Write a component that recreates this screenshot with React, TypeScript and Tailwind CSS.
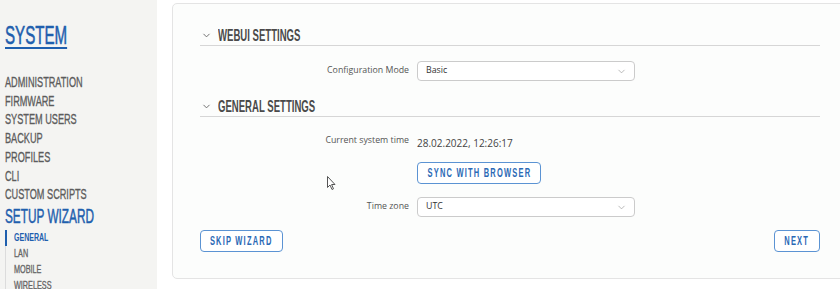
import { ChevronDown } from "lucide-react";

const sans = "font-['Liberation_Sans','Arial',sans-serif]";
const body = "font-['Open_Sans','Liberation_Sans',sans-serif]";

// no condensed face installed, so narrow the glyphs by hand
const squeeze = "inline-block whitespace-nowrap origin-left";

const menu = [
  "ADMINISTRATION",
  "FIRMWARE",
  "SYSTEM USERS",
  "BACKUP",
  "PROFILES",
  "CLI",
  "CUSTOM SCRIPTS",
];

const wizardSteps = ["GENERAL", "LAN", "MOBILE", "WIRELESS"];

function SectionHeader({ title }: { title: string }) {
  return (
    <div className="flex h-[21px] items-center border-b border-[#d6d6d6]">
      <ChevronDown className="ml-[1px] h-[11px] w-[11px] text-[#666]" strokeWidth={2} />
      <span
        className={`${sans} ${squeeze} ml-[6px] scale-x-[0.58] text-[16.5px] leading-[20px] font-bold text-[#4a4a4a]`}
      >
        {title}
      </span>
    </div>
  );
}

function FormRow({ label, children }: { label: string; children: React.ReactNode }) {
  return (
    <div className="flex h-[20px] items-center">
      <div className={`${body} w-[209px] text-right text-[8.8px] text-[#555]`}>{label}</div>
      <div className="ml-[8px]">{children}</div>
    </div>
  );
}

function Select({ value }: { value: string }) {
  return (
    <div className="flex h-[20px] w-[218px] items-center justify-between rounded-[4px] border border-[#cbcbcb] bg-white pl-[8px] pr-[7px]">
      <span className={`${body} text-[8.8px] text-[#333]`}>{value}</span>
      <ChevronDown className="h-[11px] w-[11px] text-[#9a9a9a]" strokeWidth={1.5} />
    </div>
  );
}

function OutlineButton({ label, width }: { label: string; width: string }) {
  return (
    <button
      className={`${width} flex h-[22px] items-center justify-center overflow-visible rounded-[4px] border-[1.5px] border-[#5b93d3] bg-white`}
    >
      <span
        className={`${sans} inline-block origin-center scale-x-[0.6] whitespace-nowrap text-[12.5px] font-bold tracking-[0.16em] text-[#2b69b5]`}
      >
        {label}
      </span>
    </button>
  );
}

export default function App() {
  return (
    <div className="relative flex h-[289px] w-[840px] overflow-hidden bg-white">
      <aside
        className={`${sans} w-[157px] shrink-0 bg-[#f4f4f2] pl-[5px] [-webkit-text-stroke:0.35px_currentColor]`}
      >
        <div className="pt-[20px]">
          <a
            className={`${squeeze} scale-x-[0.57] text-[26.5px] leading-[30px] text-[#1f5fae] underline decoration-[2px] underline-offset-[3px] [-webkit-text-stroke:0.6px_currentColor]`}
          >
            SYSTEM
          </a>
        </div>
        <ul className="mt-[22px] text-[15px] leading-[18.7px] text-[#5c5c5c]">
          {menu.map((item) => (
            <li key={item}>
              <span className={`${squeeze} scale-x-[0.61]`}>{item}</span>
            </li>
          ))}
        </ul>
        <div className="mt-[1.5px] text-[20px] leading-[22px] text-[#1f5fae] [-webkit-text-stroke:0.5px_currentColor]">
          <span className={`${squeeze} scale-x-[0.59]`}>SETUP WIZARD</span>
        </div>
        <ul className="mt-[3px] border-l border-[#dcdcdc] text-[11px] leading-[15.7px] text-[#666]">
          {wizardSteps.map((step, i) => (
            <li
              key={step}
              className={
                i === 0
                  ? "-ml-px border-l-[2px] border-[#1f5fae] pl-[7px] font-bold text-[#1f5fae] [-webkit-text-stroke:0px]"
                  : "pl-[8px]"
              }
            >
              <span className={`${squeeze} ${i === 0 ? "scale-x-[0.64]" : "scale-x-[0.66]"}`}>
                {step}
              </span>
            </li>
          ))}
        </ul>
      </aside>

      <main className="pl-[15px] pt-[3px]">
        <div className="h-[276px] w-[700px] rounded-[5px] border border-[#e4e4e4] bg-[#fcfdfc] pl-[27px] pt-[21px]">
          <div className="w-[620px]">
            <SectionHeader title="WEBUI SETTINGS" />

            <div className="mt-[15px]">
              <FormRow label="Configuration Mode">
                <Select value="Basic" />
              </FormRow>
            </div>

            <div className="mt-[15px]">
              <SectionHeader title="GENERAL SETTINGS" />
            </div>

            <div className="mt-[14px]">
              <FormRow label="Current system time">
                <span className={`${body} text-[10px] text-[#444]`}>28.02.2022, 12:26:17</span>
              </FormRow>
            </div>

            <div className="mt-[11px] pl-[217px]">
              <OutlineButton label="SYNC WITH BROWSER" width="w-[124px]" />
            </div>

            <div className="mt-[13px]">
              <FormRow label="Time zone">
                <Select value="UTC" />
              </FormRow>
            </div>

            <div className="mt-[13px] flex justify-between">
              <OutlineButton label="SKIP WIZARD" width="w-[83px]" />
              <OutlineButton label="NEXT" width="w-[46px]" />
            </div>
          </div>
        </div>
      </main>

      <svg
        className="absolute left-[327px] top-[176px]"
        width="10"
        height="15"
        viewBox="0 0 10 15"
      >
        <path
          d="M0.5 0.5 L0.5 11.5 L3 9 L5 13.5 L6.5 12.8 L4.6 8.5 L8 8.5 Z"
          fill="white"
          stroke="#555"
          strokeWidth="1"
          strokeLinejoin="round"
        />
      </svg>
    </div>
  );
}
